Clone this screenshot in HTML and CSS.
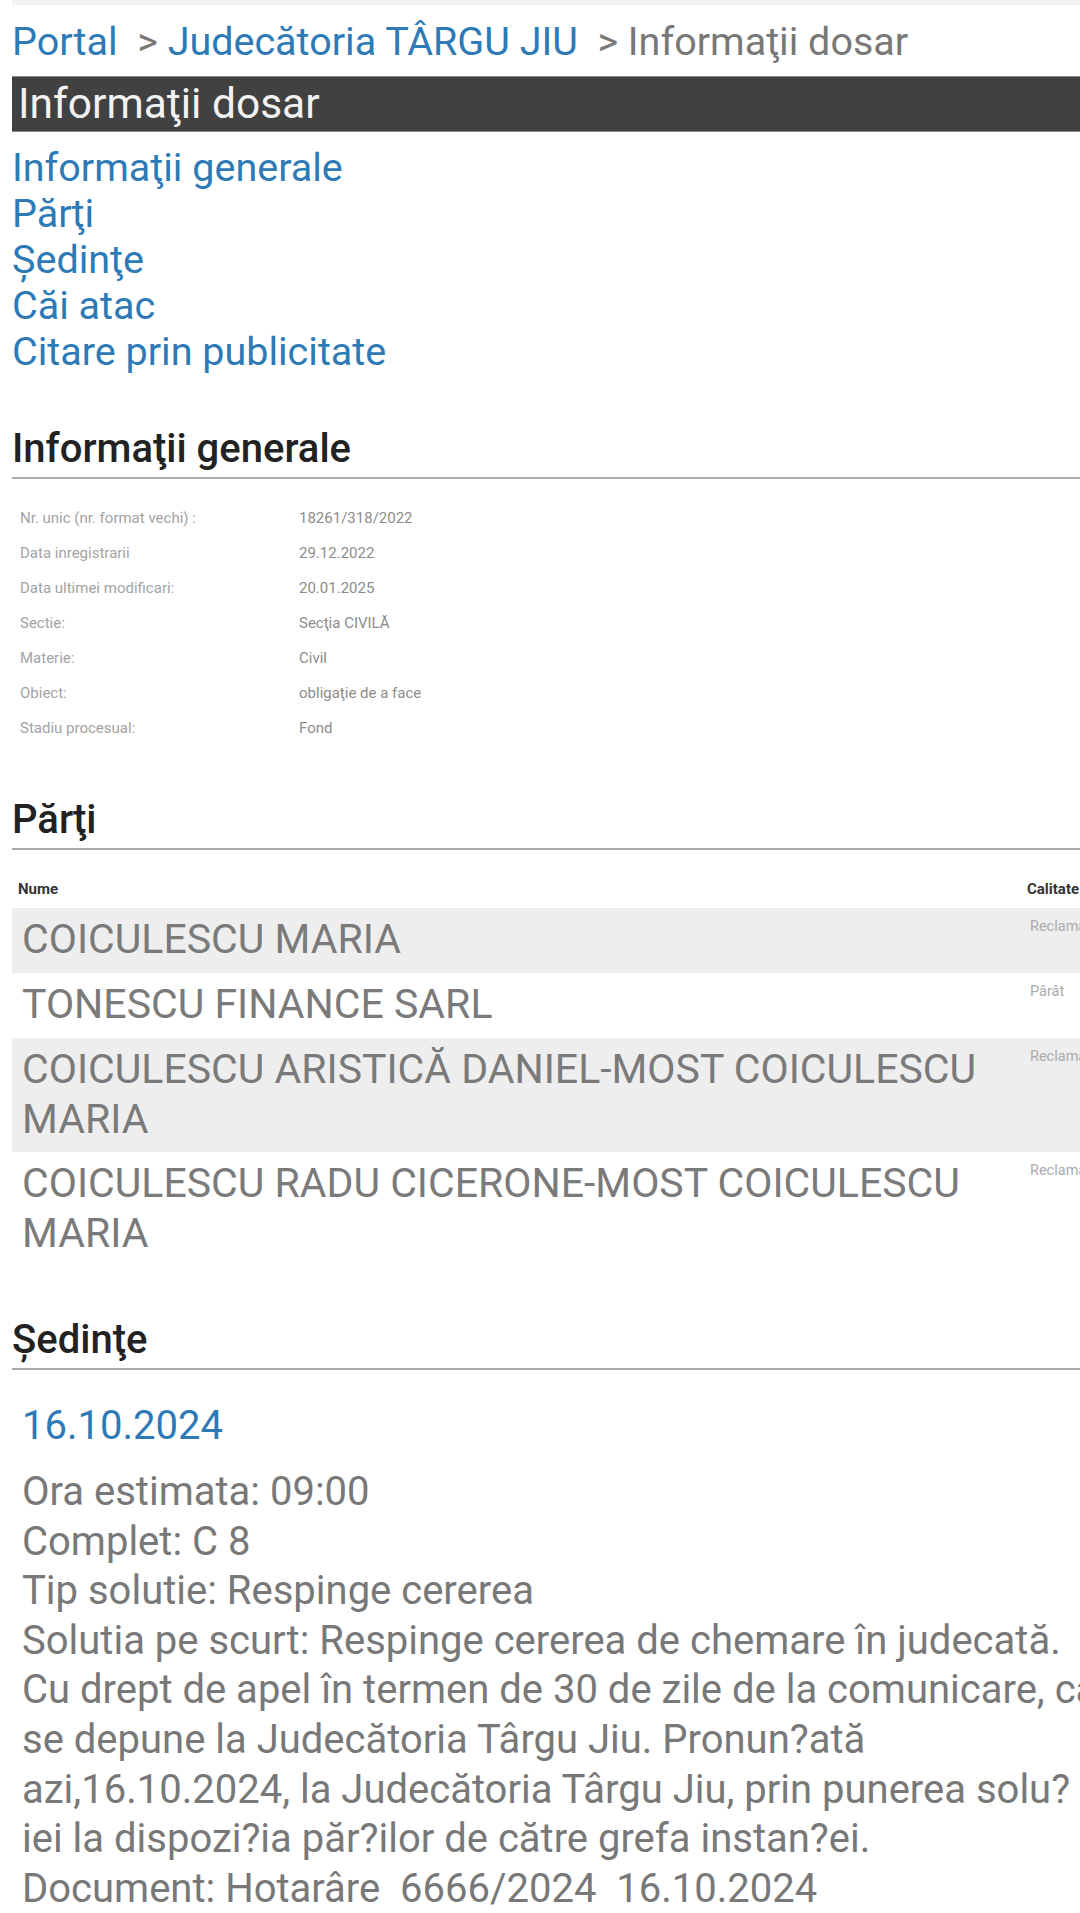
FILE: index.html
```html
<!DOCTYPE html>
<html lang="ro">
<head>
<meta charset="utf-8">
<title>Informaţii dosar</title>
<link rel="stylesheet" href="styles.css">
</head>
<body>
<div class="topstrip"></div>
<div class="page">
  <div class="breadcrumb"><a class="crumb" href="#">Portal</a>&nbsp;&nbsp;<span class="sep">&gt; </span><a class="crumb" href="#">Judecătoria TÂRGU JIU</a>&nbsp;&nbsp;<span class="sep">&gt; Informaţii dosar</span></div>
  <div class="titlebar">Informaţii dosar</div>
  <nav class="toc">
    <a href="#">Informaţii generale</a>
    <a href="#">Părţi</a>
    <a href="#">Şedinţe</a>
    <a href="#">Căi atac</a>
    <a href="#">Citare prin publicitate</a>
  </nav>

  <h2 class="section-title">Informaţii generale</h2>
  <table class="info">
    <tr><td class="label">Nr. unic (nr. format vechi) :</td><td class="value">18261/318/2022</td></tr>
    <tr><td class="label">Data inregistrarii</td><td class="value">29.12.2022</td></tr>
    <tr><td class="label">Data ultimei modificari:</td><td class="value">20.01.2025</td></tr>
    <tr><td class="label">Sectie:</td><td class="value">Secţia CIVILĂ</td></tr>
    <tr><td class="label">Materie:</td><td class="value">Civil</td></tr>
    <tr><td class="label">Obiect:</td><td class="value">obligaţie de a face</td></tr>
    <tr><td class="label">Stadiu procesual:</td><td class="value">Fond</td></tr>
  </table>

  <h2 class="section-title">Părţi</h2>
  <table class="parties">
    <thead>
      <tr><th class="h-name">Nume</th><th class="h-role">Calitate parte</th></tr>
    </thead>
    <tbody>
      <tr><td class="name">COICULESCU MARIA</td><td class="role">Reclamant</td></tr>
      <tr><td class="name">TONESCU FINANCE SARL</td><td class="role">Pârât</td></tr>
      <tr><td class="name">COICULESCU ARISTICĂ DANIEL-MOST COICULESCU MARIA</td><td class="role">Reclamant</td></tr>
      <tr><td class="name">COICULESCU RADU CICERONE-MOST COICULESCU MARIA</td><td class="role">Reclamant</td></tr>
    </tbody>
  </table>

  <h2 class="section-title">Şedinţe</h2>
  <div class="session">
    <div class="session-date">16.10.2024</div>
    <div class="session-body">Ora estimata: 09:00<br>Complet: C 8<br>Tip solutie: Respinge cererea<br>Solutia pe scurt: Respinge cererea de chemare în judecată.<br>Cu drept de apel în termen de 30 de zile de la comunicare, care<br>se depune la Judecătoria Târgu Jiu. Pronun?ată<br>azi,16.10.2024, la Judecătoria Târgu Jiu, prin punerea solu?<br>iei la dispozi?ia păr?ilor de către grefa instan?ei.<br>Document: Hotarâre&nbsp; 6666/2024&nbsp; 16.10.2024</div>
  </div>
</div>
</body>
</html>
```
FILE: styles.css
```css
html, body {
  margin: 0;
  padding: 0;
  background: #ffffff;
  overflow: hidden;
}

body {
  font-family: Roboto, "Liberation Sans", sans-serif;
  color: #787878;
}

a {
  text-decoration: none;
  color: #2d7ab6;
}

.topstrip {
  height: 5px;
  margin-left: 12px;
  background: #f3f3f3;
}

.page {
  width: 1150px;
  padding-left: 12px;
}

.breadcrumb {
  margin-top: 14px;
  font-size: 39.5px;
  line-height: 46px;
  color: #787878;
  white-space: nowrap;
}

.crumb {
  color: #2d7ab6;
}

.titlebar {
  margin-top: 11px;
  height: 56px;
  padding-left: 6px;
  background: #414141;
  border-top: 1px solid #8a8a8a;
  border-bottom: 1px solid #8a8a8a;
  box-sizing: border-box;
  color: #f2f2f2;
  font-size: 42.5px;
  line-height: 54px;
  white-space: nowrap;
}

.toc {
  margin-top: 13px;
  display: flex;
  flex-direction: column;
  align-items: flex-start;
  font-size: 39.5px;
  line-height: 46px;
}

.section-title {
  margin: 51px 0 0;
  padding-bottom: 5px;
  border-bottom: 2px solid #a9a9a9;
  font-size: 40px;
  font-weight: 500;
  line-height: 46px;
  color: #222222;
}

.info {
  margin-top: 22px;
  border-collapse: collapse;
}

.info td {
  height: 35px;
  padding: 0 8px;
  font-size: 15px;
  line-height: 35px;
  white-space: nowrap;
  vertical-align: top;
}

.info .label {
  width: 263px;
  color: #a3a3a3;
}

.info .value {
  color: #8c8c8c;
}

.parties {
  margin-top: 31px;
  margin-bottom: 4px;
  border-collapse: collapse;
  width: 1158px;
}

.parties th {
  padding: 0 0 11px;
  font-size: 15px;
  font-weight: 700;
  line-height: 16px;
  color: #333333;
  text-align: left;
  white-space: nowrap;
}

.parties .h-name {
  padding-left: 6px;
}

.parties .h-role {
  padding-left: 7px;
}

.parties tbody tr {
  height: 65px;
}

.parties tbody tr:nth-child(odd) {
  background: #eeeeee;
}

.parties .name {
  width: 988px;
  padding: 6px 10px 8px;
  font-size: 41px;
  line-height: 50px;
  color: #7a7a7a;
  vertical-align: top;
}

.parties .role {
  padding: 10px 10px;
  font-size: 14.5px;
  line-height: 18px;
  color: #ababab;
  vertical-align: top;
  white-space: nowrap;
}

.session {
  padding-left: 10px;
}

.session-date {
  margin-top: 32px;
  font-size: 40px;
  line-height: 47px;
  color: #2d7ab6;
}

.session-body {
  margin-top: 18px;
  font-size: 40px;
  line-height: 49.6px;
  color: #787878;
  white-space: nowrap;
}
```
